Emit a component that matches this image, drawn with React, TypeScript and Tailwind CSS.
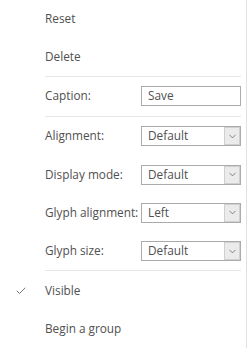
import { ChevronDown, Check } from 'lucide-react';

const font = { fontFamily: '"Open Sans", "Noto Sans", sans-serif' };

const MenuItem = ({ label, checked, h }: { label: string; checked?: boolean; h: string }) => (
  <div className={`relative flex items-center pl-[45px] ${h}`}>
    {checked && (
      <Check size={12} strokeWidth={1.75} className="absolute left-[15px] text-[#666]" />
    )}
    <span>{label}</span>
  </div>
);

const Separator = () => <div className="ml-[45px] mr-[5px] h-px bg-[#e6e6e6]" />;

const SelectRow = ({ label, value, h }: { label: string; value: string; h: string }) => (
  <div className={`flex items-center pl-[45px] pr-[5px] ${h}`}>
    <span className="w-[96px] shrink-0 whitespace-nowrap">{label}</span>
    <div className="flex h-[20px] flex-1 border border-[#ababab] bg-white">
      <span className="flex flex-1 items-center pl-[6px] leading-none">{value}</span>
      <div className="flex w-[16px] items-center justify-center border border-[#d0d0d0] bg-[#ebebeb]">
        <ChevronDown size={11} strokeWidth={1.5} className="text-[#555]" />
      </div>
    </div>
  </div>
);

export default function App() {
  return (
    <div
      className="flex h-[348px] w-[247px] flex-col overflow-hidden border-r border-[#e1e1e1] bg-white text-[11.8px] text-[#505050]"
      style={font}
    >
      <MenuItem label="Reset" h="h-[38px]" />
      <MenuItem label="Delete" h="h-[38px]" />
      <Separator />
      <div className="flex h-[39px] items-center pl-[45px] pr-[5px]">
        <span className="w-[96px] shrink-0">Caption:</span>
        <div className="flex h-[20px] flex-1 items-center border border-[#ababab] pl-[6px]">Save</div>
      </div>
      <Separator />
      <SelectRow label="Alignment:" value="Default" h="h-[39px]" />
      <SelectRow label="Display mode:" value="Default" h="h-[38px]" />
      <SelectRow label="Glyph alignment:" value="Left" h="h-[39px]" />
      <SelectRow label="Glyph size:" value="Default" h="h-[38px]" />
      <Separator />
      <MenuItem label="Visible" checked h="h-[39px]" />
      <MenuItem label="Begin a group" h="h-[38px]" />
    </div>
  );
}
